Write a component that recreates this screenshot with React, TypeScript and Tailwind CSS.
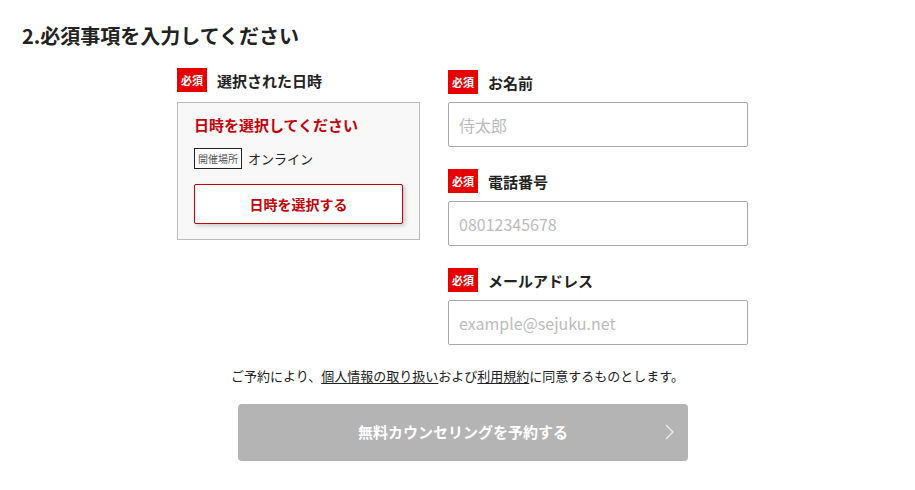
import React from "react";

const font = { fontFamily: '"Noto Sans CJK JP", "Noto Sans", sans-serif' };

const Badge = () => (
  <span className="flex h-[24px] w-[30px] shrink-0 items-center justify-center bg-[#e60000] text-[11px] font-bold leading-none text-white">
    必須
  </span>
);

const Label = ({ children }: { children: React.ReactNode }) => (
  <div className="flex h-[24px] items-center gap-[10px]">
    <Badge />
    <span className="text-[15px] font-bold leading-none text-[#222]">{children}</span>
  </div>
);

const Field = ({ label, placeholder }: { label: string; placeholder: string }) => (
  <div className="flex flex-col gap-[8px]">
    <Label>{label}</Label>
    <input
      className="h-[45px] w-full rounded-[2px] border border-[#aaaaaa] bg-white px-[10px] text-[16px] text-[#222] outline-none placeholder:text-[#bbbbbb]"
      placeholder={placeholder}
    />
  </div>
);

export default function App() {
  return (
    <div className="min-h-[490px] w-[915px] bg-white text-[#222]" style={font}>
      <div className="px-[22px] pt-[23px]">
        <h2 className="text-[20px] font-bold leading-[26px] text-[#222]">2.必須事項を入力してください</h2>

        <div className="mt-[19px] flex gap-[28px] pl-[155px]">
          <div className="flex w-[243px] flex-col gap-[10px]">
            <Label>選択された日時</Label>
            <div className="border border-[#bcbcbc] bg-[#f8f8f8] px-[16px] pb-[15px] pt-[11px]">
              <p className="text-[15px] font-bold leading-[22px] text-[#c4000b]">日時を選択してください</p>
              <div className="mt-[12px] flex items-center gap-[6px]">
                <span className="flex h-[21px] items-center border border-[#222] bg-white px-[3px] text-[10px] leading-none text-[#555]">
                  開催場所
                </span>
                <span className="text-[13px] leading-none text-[#222]">オンライン</span>
              </div>
              <button className="mt-[15px] flex h-[40px] w-full items-center justify-center rounded-[2px] border border-[#c4000b] bg-white text-[14px] font-bold text-[#c4000b] shadow-[2px_2px_4px_rgba(0,0,0,0.18)]">
                日時を選択する
              </button>
            </div>
          </div>

          <div className="flex w-[300px] flex-col gap-[22px] pt-[2px]">
            <Field label="お名前" placeholder="侍太郎" />
            <Field label="電話番号" placeholder="08012345678" />
            <Field label="メールアドレス" placeholder="example@sejuku.net" />
          </div>
        </div>

        <p className="mt-[21px] text-center text-[13px] leading-[20px] text-[#222]">
          ご予約により、<span className="underline underline-offset-2">個人情報の取り扱い</span>および
          <span className="underline underline-offset-2">利用規約</span>に同意するものとします。
        </p>

        <div className="mt-[18px] flex justify-center pl-[11px]">
          <button className="relative flex h-[57px] w-[450px] items-center justify-center rounded-[4px] bg-[#b4b4b4] text-[15px] font-bold text-white">
            無料カウンセリングを予約する
            <svg className="absolute right-[14px] top-[20px]" width="9" height="16" viewBox="0 0 9 16" fill="none">
              <path d="M1 1l7 7-7 7" stroke="#f0f0f0" strokeWidth="1.2" />
            </svg>
          </button>
        </div>
      </div>
    </div>
  );
}
